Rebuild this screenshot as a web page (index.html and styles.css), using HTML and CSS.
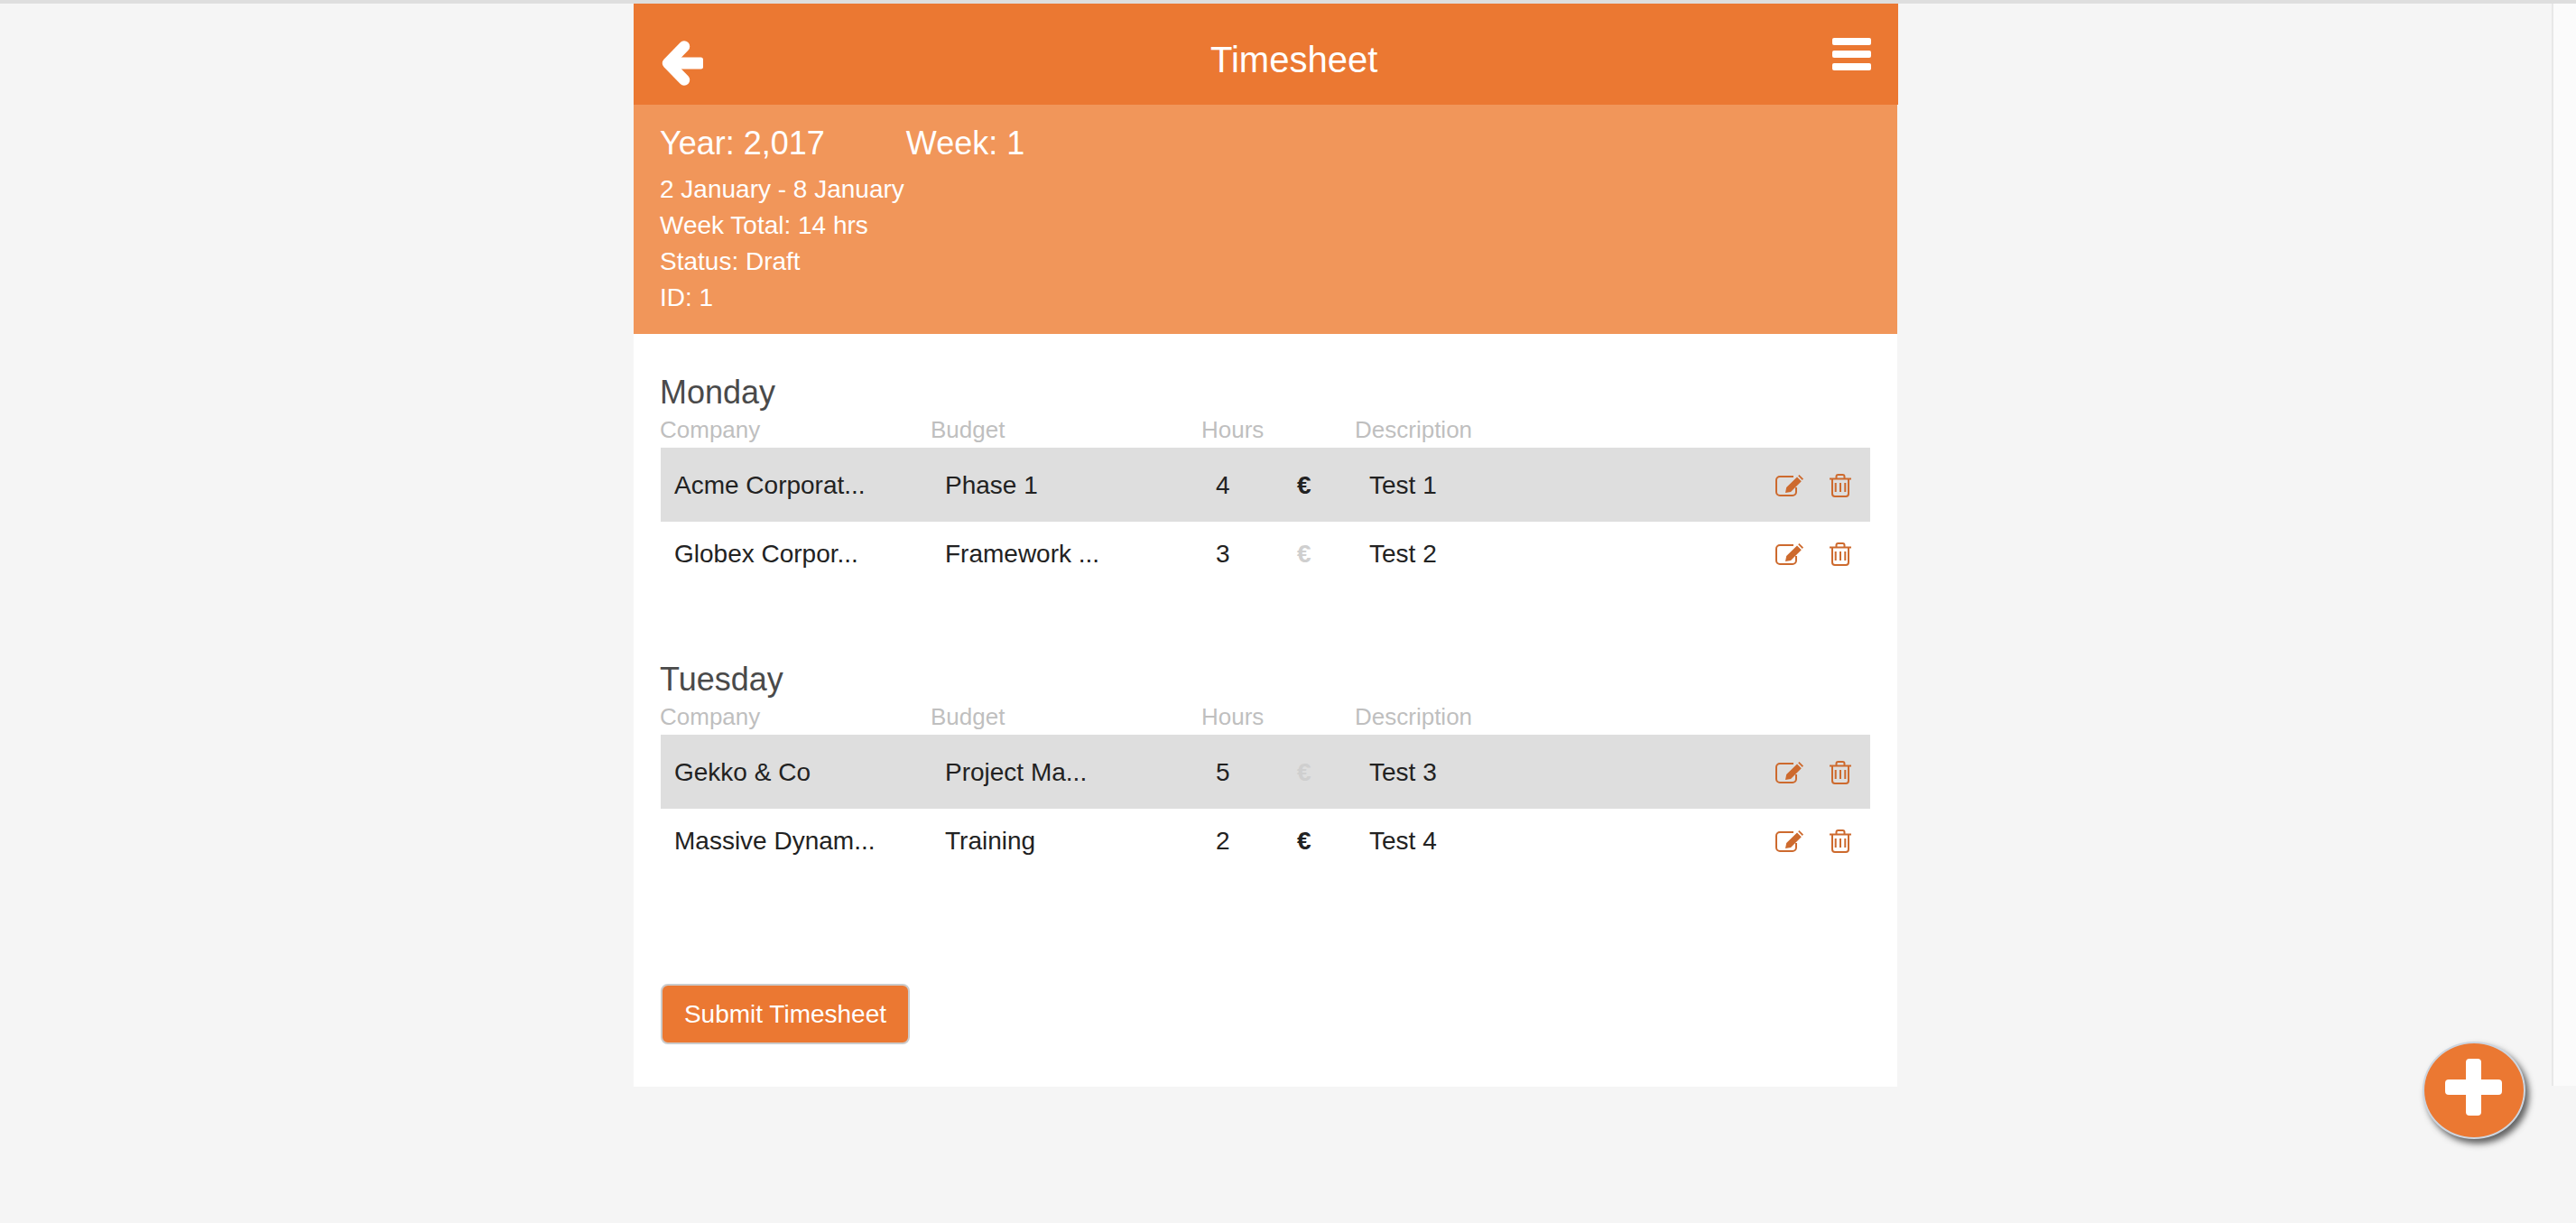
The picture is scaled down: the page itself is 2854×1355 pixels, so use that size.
FILE: index.html

```html
<!DOCTYPE html>
<html lang="en">

<head>
  <meta charset="UTF-8">
  <title>Timesheet</title>
  <link rel="stylesheet" href="styles.css">
</head>

<body>
  <svg class="sprites" width="0" height="0">
    <symbol id="icon-edit" viewBox="0 0 31 24">
      <path d="M20 2H5a4 4 0 0 0-4 4v13a4 4 0 0 0 4 4h14a4 4 0 0 0 4-4v-5" fill="none" stroke="currentColor" stroke-width="2" />
      <path d="M11 20l1.200-6L24 2.500l4.800 4.800L17 19zM25.200 1.200L26.400 0l4.600 4.400-1.200 1.600z" fill="currentColor" />
    </symbol>
    <symbol id="icon-trash" viewBox="0 0 24 26">
      <path d="M0 5.500h24M3 5.500V22a3 3 0 0 0 3 3h12a3 3 0 0 0 3-3V5.500M7.500 5V3a2 2 0 0 1 2-2h5a2 2 0 0 1 2 2v2" fill="none" stroke="currentColor" stroke-width="2" />
      <path d="M6.700 10v10M12 10v10M17.300 10v10" fill="none" stroke="currentColor" stroke-width="2" />
    </symbol>
  </svg>

  <div class="app">
    <header class="topbar">
      <svg class="back-icon" viewBox="0 0 46 50" width="46" height="50">
        <path d="M25 6.500L7 25l18 18.500" fill="none" stroke="#fff" stroke-width="12.500" stroke-linecap="round" stroke-linejoin="round" />
        <rect x="8" y="18.500" width="38" height="13" rx="2.500" fill="#fff" />
      </svg>
      <h1 class="title">Timesheet</h1>
      <div class="menu-icon">
        <span></span>
        <span></span>
        <span></span>
      </div>
    </header>

    <section class="summary">
      <div class="summary-main">
        <span>Year: 2,017</span>
        <span>Week: 1</span>
      </div>
      <div class="summary-line">2 January - 8 January</div>
      <div class="summary-line">Week Total: 14 hrs</div>
      <div class="summary-line">Status: Draft</div>
      <div class="summary-line">ID: 1</div>
    </section>

    <main class="content">
      <section class="day">
        <h2 class="day-name">Monday</h2>
        <div class="columns">
          <span>Company</span>
          <span>Budget</span>
          <span>Hours</span>
          <span>Description</span>
        </div>
        <div class="entry entry-shaded">
          <span>Acme Corporat...</span>
          <span>Phase 1</span>
          <span>4</span>
          <span class="euro">€</span>
          <span>Test 1</span>
          <span class="actions">
            <svg class="icon-edit"><use href="#icon-edit" /></svg>
            <svg class="icon-trash"><use href="#icon-trash" /></svg>
          </span>
        </div>
        <div class="entry">
          <span>Globex Corpor...</span>
          <span>Framework ...</span>
          <span>3</span>
          <span class="euro euro-off">€</span>
          <span>Test 2</span>
          <span class="actions">
            <svg class="icon-edit"><use href="#icon-edit" /></svg>
            <svg class="icon-trash"><use href="#icon-trash" /></svg>
          </span>
        </div>
      </section>

      <section class="day">
        <h2 class="day-name">Tuesday</h2>
        <div class="columns">
          <span>Company</span>
          <span>Budget</span>
          <span>Hours</span>
          <span>Description</span>
        </div>
        <div class="entry entry-shaded">
          <span>Gekko &amp; Co</span>
          <span>Project Ma...</span>
          <span>5</span>
          <span class="euro euro-off">€</span>
          <span>Test 3</span>
          <span class="actions">
            <svg class="icon-edit"><use href="#icon-edit" /></svg>
            <svg class="icon-trash"><use href="#icon-trash" /></svg>
          </span>
        </div>
        <div class="entry">
          <span>Massive Dynam...</span>
          <span>Training</span>
          <span>2</span>
          <span class="euro">€</span>
          <span>Test 4</span>
          <span class="actions">
            <svg class="icon-edit"><use href="#icon-edit" /></svg>
            <svg class="icon-trash"><use href="#icon-trash" /></svg>
          </span>
        </div>
      </section>

      <button class="submit" type="button">Submit Timesheet</button>
    </main>
  </div>

  <div class="side-strip"></div>

  <button class="fab" type="button" aria-label="Add"></button>
</body>

</html>
```

FILE: styles.css

```css
html,
body {
  height: 100%;
}

body {
  display: flex;
  align-items: flex-start;
  box-sizing: border-box;
  margin: 0;
  border-top: 4px solid #dedede;
  background: #f5f5f5;
  color: #222;
  font-family: 'Liberation Sans', Arial, sans-serif;
  overflow: hidden;
}

.sprites {
  position: absolute;
}

.app {
  width: 1400px;
  margin-left: 702px;
  background: #fff;
}

/* orange bar */
.topbar {
  display: flex;
  align-items: flex-start;
  box-sizing: border-box;
  height: 112px;
  margin-right: -1px;
  padding: 41px 30px 0 31px;
  background: #eb7832;
  color: #fff;
}

.back-icon {
  flex: none;
}

.title {
  margin: -2px 0 0 562px;
  font-size: 40px;
  font-weight: normal;
  line-height: 46px;
}

.menu-icon {
  display: flex;
  flex-direction: column;
  gap: 6.500px;
  width: 43px;
  margin-top: -3px;
  margin-left: auto;
}

.menu-icon span {
  height: 7.500px;
  border-radius: 2px;
  background: #fff;
}

.summary {
  box-sizing: border-box;
  height: 254px;
  padding: 20px 29px 0;
  background: #f1965a;
  color: #fff;
}

.summary-main {
  display: flex;
  gap: 90px;
  margin-bottom: 8px;
  font-size: 36px;
  line-height: 46px;
}

.summary-line {
  font-size: 28px;
  line-height: 40px;
}

.content {
  padding: 44px 30px 47px;
}

.day {
  height: 318px;
}

.day-name {
  height: 46px;
  margin: 0 0 0 -1px;
  font-size: 36px;
  font-weight: normal;
  line-height: 42px;
  color: #4a4a4a;
}

.columns {
  display: grid;
  grid-template-columns: 300px 300px 170px 1fr;
  height: 36px;
  margin-left: -1px;
  font-size: 26px;
  line-height: 32px;
  color: #bfbfbf;
}

.entry {
  display: grid;
  grid-template-columns: 300px 300px 100px 70px 1fr auto;
  align-items: center;
  height: 72px;
  padding-left: 15px;
  font-size: 28px;
}

.entry-shaded {
  box-sizing: border-box;
  height: 82px;
  padding-top: 2px;
  background: #dedede;
}

.euro {
  margin-left: -10px;
  font-weight: bold;
}

.euro-off {
  color: #cfcfcf;
}

.actions {
  display: flex;
  align-items: center;
  gap: 29px;
  padding-right: 21px;
  color: #cd6a2e;
}

.icon-edit {
  width: 31px;
  height: 24px;
}

.icon-trash {
  width: 24px;
  height: 26px;
}

.submit {
  display: block;
  box-sizing: border-box;
  width: 276px;
  height: 67px;
  margin-top: 40px;
  padding: 0;
  border: 2px solid #cbcbcb;
  border-radius: 8px;
  background: #eb7832;
  color: #fff;
  font-family: inherit;
  font-size: 28px;
}

.side-strip {
  box-sizing: border-box;
  width: 27px;
  height: 1199px;
  margin-left: auto;
  border-left: 2px solid #e8e8e8;
  background: #fbfbfb;
}

/* round add button, sits over the page */
.fab {
  position: absolute;
  left: 2684px;
  top: 1154px;
  box-sizing: border-box;
  width: 114px;
  height: 108px;
  padding: 0;
  border: 2px solid #cdd5df;
  border-radius: 50%;
  background: #eb7832;
  box-shadow: 4px 5px 7px rgba(60, 60, 60, .8);
}

.fab::before,
.fab::after {
  content: '';
  position: absolute;
  border-radius: 4px;
  background: #fff;
}

.fab::before {
  left: 23px;
  top: 40px;
  width: 63px;
  height: 17px;
}

.fab::after {
  left: 46px;
  top: 17px;
  width: 17px;
  height: 63px;
}
```
